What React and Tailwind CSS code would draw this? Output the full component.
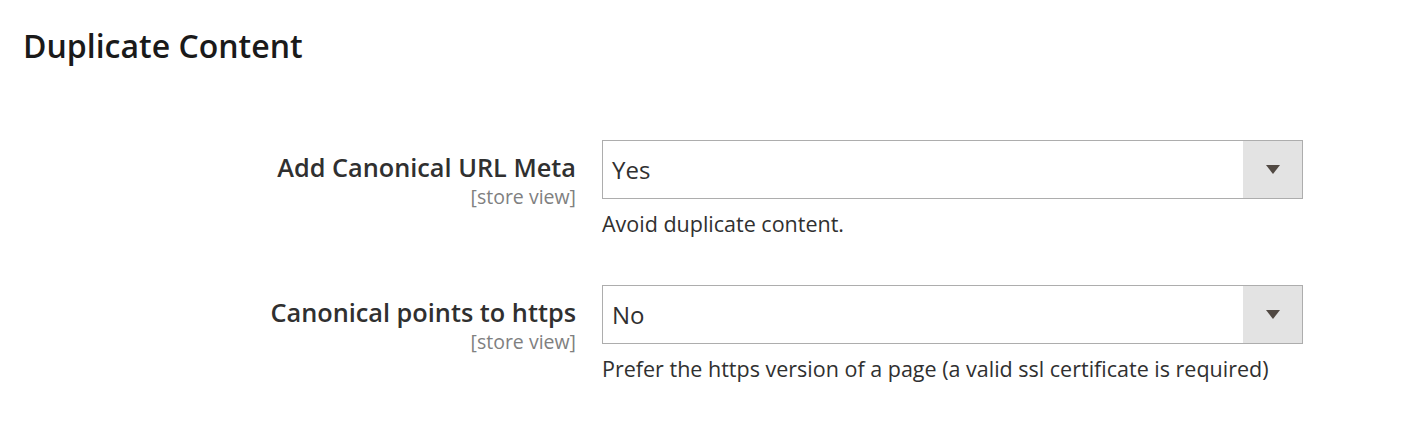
export default function App() {
  const font = { fontFamily: '"Open Sans", "Noto Sans", sans-serif' };
  const Row = ({ label, value, note }) => (
    <div className="flex items-start">
      <div className="w-[576px] shrink-0 text-right pt-[13px]">
        <div className="text-[25.3px] leading-[29px] font-semibold text-[#303030]">{label}</div>
        <div className="mt-[3px] text-[19.5px] leading-[24px] text-[#808080]">[store view]</div>
      </div>
      <div className="ml-[26px] w-[701px]">
        <div className="flex h-[59px] border border-[#adadad] bg-white">
          <div className="flex-1 flex items-center pl-[9px] text-[24px] text-[#303030]">{value}</div>
          <div className="w-[59px] bg-[#e3e3e3] flex items-center justify-center">
            <svg width="14" height="9" viewBox="0 0 14 9"><path d="M0 0 H14 L7 9 Z" fill="#514943" /></svg>
          </div>
        </div>
        <div className="mt-[10px] text-[21.5px] leading-[30px] text-[#303030]">{note}</div>
      </div>
    </div>
  );
  return (
    <div className="w-[1412px] h-[426px] bg-white" style={font}>
      <h2 className="pl-[23px] pt-[26px] text-[32px] leading-[40px] font-semibold text-[#1a1a1a]">Duplicate Content</h2>
      <div className="mt-[74px] flex flex-col gap-[46px]">
        <Row label="Add Canonical URL Meta" value="Yes" note="Avoid duplicate content." />
        <Row label="Canonical points to https" value="No" note="Prefer the https version of a page (a valid ssl certificate is required)" />
      </div>
    </div>
  );
}
